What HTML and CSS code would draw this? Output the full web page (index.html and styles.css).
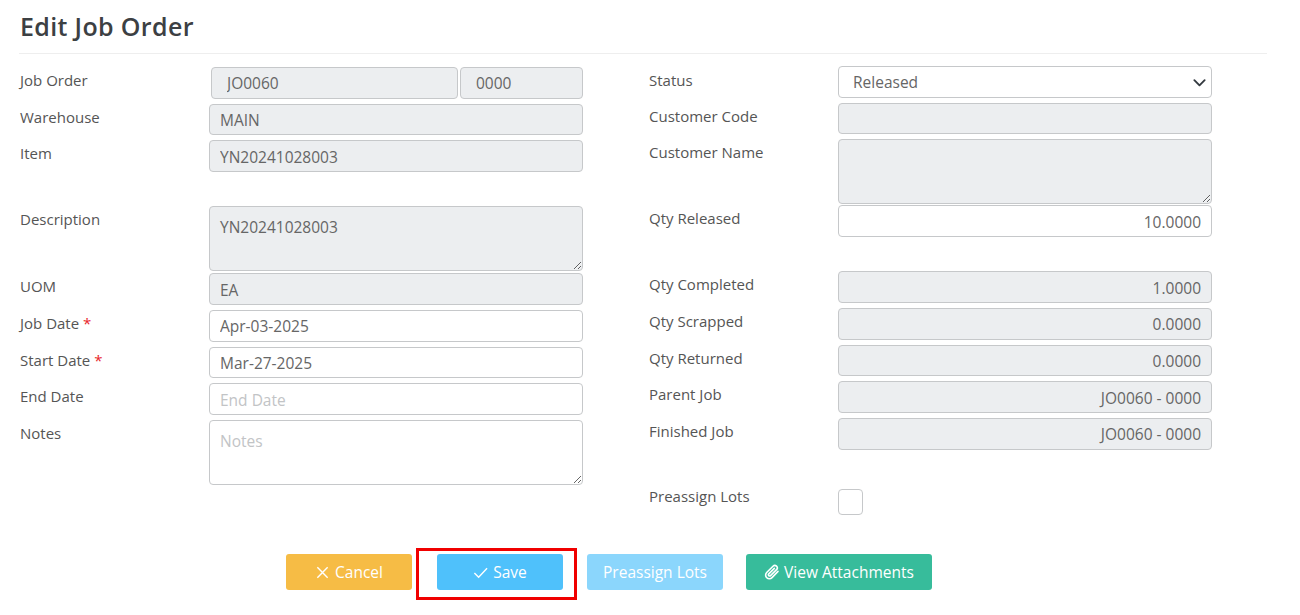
FILE: index.html
```html
<!DOCTYPE html>
<html lang="en">
<head>
<meta charset="utf-8">
<title>Edit Job Order</title>
<link rel="stylesheet" href="styles.css">
</head>
<body>
<main class="page">
  <h1 class="title">Edit Job Order</h1>
  <form class="form">
    <div class="col col-left">
      <div class="row"><label class="lbl">Job Order</label>
        <div class="split">
          <input class="field ro split-a" value="JO0060" readonly>
          <input class="field ro split-b" value="0000" readonly>
        </div></div>
      <div class="row"><label class="lbl">Warehouse</label><input class="field ro" value="MAIN" readonly></div>
      <div class="row after-gap"><label class="lbl">Item</label><input class="field ro" value="YN20241028003" readonly></div>
      <div class="row tight"><label class="lbl">Description</label><textarea class="field ro area" readonly>YN20241028003</textarea></div>
      <div class="row"><label class="lbl">UOM</label><input class="field ro" value="EA" readonly></div>
      <div class="row"><label class="lbl">Job Date <span class="req">*</span></label><input class="field" value="Apr-03-2025"></div>
      <div class="row"><label class="lbl">Start Date <span class="req">*</span></label><input class="field" value="Mar-27-2025"></div>
      <div class="row"><label class="lbl">End Date</label><input class="field" placeholder="End Date"></div>
      <div class="row"><label class="lbl">Notes</label><textarea class="field area" placeholder="Notes"></textarea></div>
    </div>
    <div class="col col-right">
      <div class="row"><label class="lbl">Status</label>
        <div class="select-wrap">
          <select class="field select"><option>Released</option></select>
          <svg class="chevron" viewBox="0 0 16 16" aria-hidden="true"><path d="M2.5 5.5 8 11l5.500-5.500" fill="none" stroke="#343a40" stroke-width="2" stroke-linecap="round" stroke-linejoin="round"/></svg>
        </div></div>
      <div class="row"><label class="lbl">Customer Code</label><input class="field ro" readonly></div>
      <div class="row tighter"><label class="lbl">Customer Name</label><textarea class="field ro area" readonly></textarea></div>
      <div class="row after-gap"><label class="lbl">Qty Released</label><input class="field num" value="10.0000"></div>
      <div class="row"><label class="lbl">Qty Completed</label><input class="field ro num" value="1.0000" readonly></div>
      <div class="row"><label class="lbl">Qty Scrapped</label><input class="field ro num" value="0.0000" readonly></div>
      <div class="row"><label class="lbl">Qty Returned</label><input class="field ro num" value="0.0000" readonly></div>
      <div class="row"><label class="lbl">Parent Job</label><input class="field ro num" value="JO0060 - 0000" readonly></div>
      <div class="row after-gap"><label class="lbl">Finished Job</label><input class="field ro num" value="JO0060 - 0000" readonly></div>
      <div class="row"><label class="lbl lbl-check">Preassign Lots</label><span class="check"></span></div>
    </div>
  </form>
  <div class="actions">
    <button type="button" class="btn btn-cancel">
      <svg class="ico" viewBox="0 0 16 16" aria-hidden="true"><path d="M2.500 2.500 13.500 13.500M13.500 2.500 2.500 13.500" fill="none" stroke="currentColor" stroke-width="1.500"/></svg>Cancel</button>
    <button type="button" class="btn btn-save">
      <svg class="ico" viewBox="0 0 16 16" aria-hidden="true"><path d="M1.500 8.500 6 13 15 3.500" fill="none" stroke="currentColor" stroke-width="1.500"/></svg>Save<span class="marker"></span></button>
    <button type="button" class="btn btn-lots">Preassign Lots</button>
    <button type="button" class="btn btn-attach">
      <svg class="ico" viewBox="0 0 24 24" aria-hidden="true"><path d="M21 11 12 20.500a5.500 5.500 0 0 1-8-7.700L13.500 3.300a3.700 3.700 0 0 1 5.300 5.200L9.800 17.400a1.800 1.800 0 0 1-2.600-2.600L15.500 6.500" fill="none" stroke="currentColor" stroke-width="2.400" stroke-linecap="round" stroke-linejoin="round"/></svg>View Attachments</button>
  </div>
</main>
</body>
</html>
```
FILE: styles.css
```css
* { box-sizing: border-box; }
html, body { margin: 0; height: 100%; background: #fff; overflow: hidden; }
body { font-family: "Open Sans", "Noto Sans", sans-serif; font-size: 15px; color: #555; }
.page { padding: 0 33px 0 19px; }
.title {
  margin: 0;
  height: 54px;
  padding: 8px 0 0 1px;
  font-size: 25px;
  line-height: 36px;
  font-weight: 600;
  letter-spacing: 0.35px;
  color: #3c4043;
  border-bottom: 1px solid #eeeeee;
}
.form { display: flex; padding-top: 13px; height: 500px; }
.col { display: flex; flex-direction: column; }
.col-left { width: 564px; margin-right: 66px; padding-left: 1px; }
.col-right { width: 564px; }
.row { display: flex; align-items: flex-start; margin-bottom: 5.2px; }
.row.after-gap { margin-bottom: 34.500px; }
.row.tight { margin-bottom: 2.500px; }
.row.tighter { margin-bottom: 1.500px; }
.lbl { width: 189px; flex: none; padding-top: 1px; line-height: 24px; font-size: 15px; color: #555; }
.lbl-check { padding-top: 0; }
.req { color: #e8232a; }
.field {
  display: block;
  width: 374px;
  height: 31.5px;
  padding: 1px 10px 0;
  border: 1px solid #c6c8ca;
  border-radius: 4px;
  background: #fff;
  font: 15.500px/22px "Open Sans", "Noto Sans", sans-serif;
  color: #666;
  outline: none;
  box-shadow: none;
}
.field::placeholder { color: #c2c4c6; opacity: 1; }
.ro { background: #eceef0; }
.num { text-align: right; }
.area { height: 64.500px; padding-top: 9px; resize: vertical; }
.split { display: flex; gap: 2px; width: 372px; margin-left: 2px; }
.split-a { width: 247px; padding-left: 15px; }
.split-b { width: 123px; padding-left: 15px; }
.select-wrap { position: relative; width: 374px; margin-top: -1px; }
.select { appearance: none; -webkit-appearance: none; padding-left: 14px; }
.chevron { position: absolute; right: 5px; top: 9px; width: 15px; height: 15px; }
.check {
  display: block;
  width: 25px;
  height: 26px;
  margin-top: 5px;
  border: 1px solid #c6c8ca;
  border-radius: 4px;
  background: #fff;
}
.actions { display: flex; padding-left: 267px; }
.btn {
  display: inline-flex;
  align-items: center;
  justify-content: center;
  position: relative;
  height: 36px;
  padding: 0;
  border: 0;
  border-radius: 3px;
  color: #fff;
  font: 15.500px/22px "Open Sans", "Noto Sans", sans-serif;
}
.ico { width: 15px; height: 15px; margin-right: 5px; flex: none; }
.btn-cancel { width: 126px; margin-right: 25px; background: #f6bc45; }
.btn-save { width: 126px; margin-right: 24px; background: #4fc1fb; }
.btn-lots { width: 136px; margin-right: 23px; background: #8bd6fc; }
.btn-attach { width: 186px; background: #37bc9b; }
.btn-attach .ico { width: 16px; height: 16px; margin-right: 4px; }
.marker {
  position: absolute;
  left: -21px;
  right: -14px;
  top: -6px;
  bottom: -10px;
  border: 3px solid #f00000;
}
```
